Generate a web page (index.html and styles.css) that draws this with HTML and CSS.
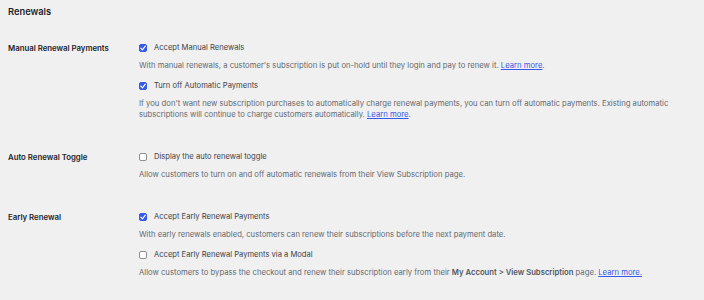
FILE: index.html
```html
<!DOCTYPE html>
<html>
<head>
<meta charset="utf-8">
<link rel="stylesheet" href="styles.css">
</head>
<body>
<div class="page">
  <h2 class="title">Renewals</h2>

  <div class="row">
    <div class="th">Manual Renewal Payments</div>
    <div class="td">
      <label class="opt"><span class="cb checked"><svg viewBox="0 0 8 8"><path d="M1.8 4.2 L3.4 5.8 L6.3 2.2" /></svg></span>Accept Manual Renewals</label>
      <p class="desc">With manual renewals, a customer's subscription is put on-hold until they login and pay to renew it. <a href="#">Learn more</a>.</p>
      <label class="opt"><span class="cb checked"><svg viewBox="0 0 8 8"><path d="M1.8 4.2 L3.4 5.8 L6.3 2.2" /></svg></span>Turn off Automatic Payments</label>
      <p class="desc">If you don't want new subscription purchases to automatically charge renewal payments, you can turn off automatic payments. Existing automatic subscriptions will continue to charge customers automatically. <a href="#">Learn more</a>.</p>
    </div>
  </div>

  <div class="row">
    <div class="th">Auto Renewal Toggle</div>
    <div class="td">
      <label class="opt"><span class="cb"></span>Display the auto renewal toggle</label>
      <p class="desc">Allow customers to turn on and off automatic renewals from their View Subscription page.</p>
    </div>
  </div>

  <div class="row">
    <div class="th">Early Renewal</div>
    <div class="td">
      <label class="opt"><span class="cb checked"><svg viewBox="0 0 8 8"><path d="M1.8 4.2 L3.4 5.8 L6.3 2.2" /></svg></span>Accept Early Renewal Payments</label>
      <p class="desc">With early renewals enabled, customers can renew their subscriptions before the next payment date.</p>
      <label class="opt"><span class="cb"></span>Accept Early Renewal Payments via a Modal</label>
      <p class="desc">Allow customers to bypass the checkout and renew their subscription early from their <strong>My Account &gt; View Subscription</strong> page. <a href="#">Learn more.</a></p>
    </div>
  </div>
</div>
</body>
</html>
```

FILE: styles.css
```css
html, body {
  margin: 0;
  padding: 0;
  background: #f0f0f1;
}
body {
  font-family: Inter, "Noto Sans", "Liberation Sans", sans-serif;
  color: #3c434a;
  -webkit-font-smoothing: antialiased;
}
.page {
  padding: 0 8px;
}
.title {
  margin: 0 0 1px;
  padding-top: 6px;
  font-size: 9.3px;
  line-height: 12px;
  font-weight: 600;
  color: #1d2327;
}
.row {
  display: grid;
  grid-template-columns: 131px 1fr;
  padding: 23px 0 8px;
}
.th {
  font-size: 7.8px;
  line-height: 12px;
  font-weight: 600;
  color: #1d2327;
}
.td {
  max-width: 540px;
}
.opt {
  display: flex;
  align-items: center;
  gap: 7px;
  font-size: 7.6px;
  line-height: 12px;
  color: #3c434a;
}
.cb {
  box-sizing: border-box;
  width: 8px;
  height: 8px;
  border: 1px solid #8c8f94;
  border-radius: 2px;
  background: #fff;
  display: inline-flex;
  flex: none;
}
.cb.checked {
  background: #3858e9;
  border-color: #3858e9;
}
.cb svg {
  width: 8px;
  height: 8px;
  margin: -1px;
}
.cb svg path {
  fill: none;
  stroke: #fff;
  stroke-width: 1.2;
  stroke-linecap: round;
  stroke-linejoin: round;
}
.desc {
  margin: 6px 0 9px;
  font-size: 7.7px;
  line-height: 11px;
  color: #646970;
}
.desc:last-child {
  margin-bottom: 0;
}
.desc a {
  color: #3858e9;
  text-decoration: underline;
}
.desc strong {
  font-weight: 600;
  color: #50575e;
}
```
